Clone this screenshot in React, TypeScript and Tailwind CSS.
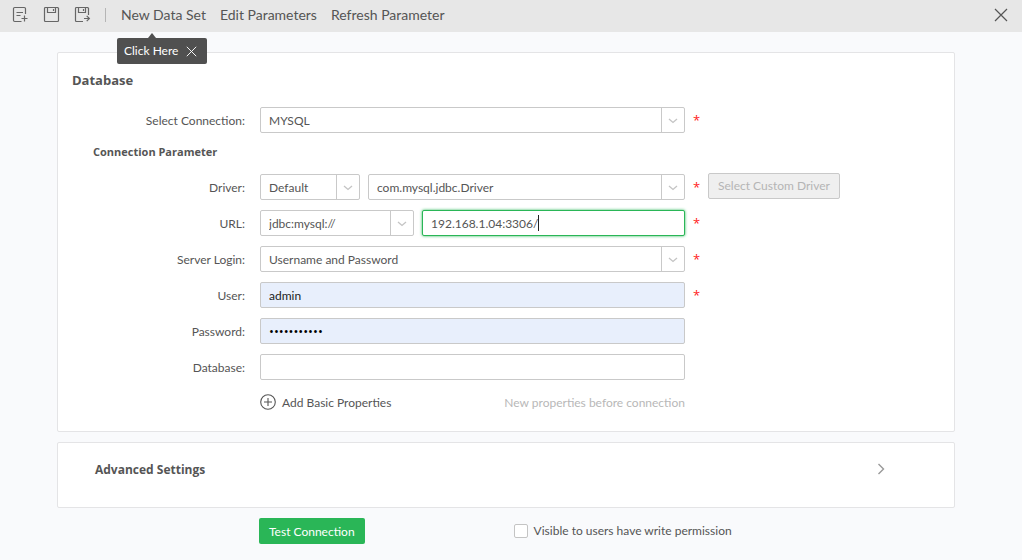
import React, { useState } from 'react';

interface FieldRowProps {
  label: string;
  htmlFor: string;
  children: React.ReactNode;
  required?: boolean;
  extra?: React.ReactNode;
}

const FieldRow: React.FC<FieldRowProps> = ({ label, htmlFor, children, required, extra }) => (
  <div className="flex h-[26px] items-center">
    <label htmlFor={htmlFor} className="w-[187px] shrink-0 pt-0.5 text-right">
      {label}
    </label>
    <div className="ml-[15px] flex w-[425px] gap-2">{children}</div>
    {required && <span className="ml-2 w-[15px] font-['Open_Sans',sans-serif] text-[13px] text-[#ff2020]">*</span>}
    {extra}
  </div>
);

interface SelectBoxProps {
  id: string;
  options: string[];
  className?: string;
  label?: string;
}

const SelectBox: React.FC<SelectBoxProps> = ({ id, options, className = 'flex-1', label }) => (
  <div className={`relative ${className}`}>
    <select
      id={id}
      aria-label={label}
      className="block h-[26px] w-full appearance-none rounded-xs border border-[#c9c9c9] bg-white pt-0.5 pr-6 pl-2 outline-none"
    >
      {options.map((o) => (
        <option key={o}>{o}</option>
      ))}
    </select>
    <span className="pointer-events-none absolute inset-y-0 right-0 flex w-6 items-center justify-center border-l border-[#c9c9c9] pt-px pr-px">
      <svg width="10" height="6" viewBox="0 0 10 6" fill="none" stroke="#c4c4c4" strokeWidth="1.3">
        <path d="M1 1l4 3.5L9 1" />
      </svg>
    </span>
  </div>
);

const iconProps = {
  width: 18,
  height: 18,
  viewBox: '0 0 18 18',
  fill: 'none',
  stroke: '#666',
  strokeWidth: 1.2,
};

const NewIcon = () => (
  <svg {...iconProps}>
    <path d="M9.5 15.5H2.7a1.2 1.2 0 0 1-1.2-1.2V2.7a1.2 1.2 0 0 1 1.2-1.2h9.6a1.2 1.2 0 0 1 1.2 1.2V8" />
    <path d="M4.5 6.5h6.5M4.5 9.5h4M12.5 9.5v6M9.5 12.5h6" />
  </svg>
);

const SaveIcon = () => (
  <svg {...iconProps}>
    <path d="M2.5 1.5h12.2l.8.8v12.2a1 1 0 0 1-1 1h-12a1 1 0 0 1-1-1v-12a1 1 0 0 1 1-1z" />
    <path d="M4.5 1.5v5h8v-5M10.5 3v2" />
  </svg>
);

const SaveAsIcon = () => (
  <svg {...iconProps}>
    <path d="M9 15.5H2.5a1 1 0 0 1-1-1v-12a1 1 0 0 1 1-1h11.2l.8.8V9" />
    <path d="M4.5 1.5v5h7v-5M9.5 3v2M10 12.5h5.5M12.7 9.8l2.7 2.7-2.7 2.7" />
  </svg>
);

const CrossIcon: React.FC<{ size: number }> = ({ size }) => (
  <svg width={size} height={size} viewBox="0 0 14 14" fill="none" stroke="currentColor" strokeWidth="1.2">
    <path d="M1 1l12 12M13 1L1 13" />
  </svg>
);

const Toolbar = () => (
  <header className="flex h-8 items-center bg-[#e7e7e7] pr-[14px] pb-0.5 pl-3 text-[14px] text-[#555]">
    <div className="flex items-center gap-[13px]">
      <button aria-label="New"><NewIcon /></button>
      <button aria-label="Save"><SaveIcon /></button>
      <button aria-label="Save as"><SaveAsIcon /></button>
    </div>
    <span className="ml-[13px] h-[14px] w-px bg-[#b5b5b5]" />
    <nav className="ml-[15px] flex gap-[14px] leading-4 whitespace-nowrap">
      <div className="relative">
        <button className="block">New Data Set</button>
        <div className="absolute top-[31px] -left-1 z-10 flex h-[26px] items-center gap-2 rounded-xs bg-[#505050] pr-[10px] pl-[7px] text-[12px] text-white">
          <span className="absolute -top-[5px] left-[31px] border-x-4 border-b-[5px] border-x-transparent border-b-[#505050]" />
          Click Here
          <button aria-label="Close tip"><CrossIcon size={11} /></button>
        </div>
      </div>
      <button>Edit Parameters</button>
      <button>Refresh Parameter</button>
    </nav>
    <button aria-label="Close" className="ml-auto"><CrossIcon size={14} /></button>
  </header>
);

const App: React.FC = () => {
  const [url, setUrl] = useState('192.168.1.04:3306/');
  const [user, setUser] = useState('admin');
  const [password, setPassword] = useState('adminadmin1');
  const [database, setDatabase] = useState('');

  return (
    <div className="min-h-screen bg-[#f9fafc] font-['Lato','Open_Sans',sans-serif] text-[12px] leading-4 text-[#555]">
      <Toolbar />

      <main className="flex flex-col gap-[10px] pt-5 pr-[67px] pl-[57px]">
        <section className="rounded-xs border border-[#e4e4e6] bg-white pb-5">
          <h2 className="pt-[17px] pl-[14px] font-['Open_Sans',sans-serif] text-[13px] leading-5 font-bold">Database</h2>

          <div className="mt-[17px]">
            <FieldRow label="Select Connection:" htmlFor="connection" required>
              <SelectBox id="connection" options={['MYSQL', 'Oracle', 'PostgreSQL']} />
            </FieldRow>
          </div>

          <h3 className="mt-[9px] mb-[13px] pl-[35px] font-['Open_Sans',sans-serif] text-[11px] leading-[19px] font-bold">
            Connection Parameter
          </h3>

          <div className="flex flex-col gap-[10px]">
            <FieldRow
              label="Driver:"
              htmlFor="driver"
              required
              extra={
                <button
                  disabled
                  className="mb-0.5 h-[26px] rounded-xs border border-[#c9c9c9] bg-[#efefef] px-[9px] whitespace-nowrap text-[#b5b5b5]"
                >
                  Select Custom Driver
                </button>
              }
            >
              <SelectBox id="driver" options={['Default', 'Custom']} className="w-[100px]" />
              <SelectBox id="driver-class" label="Driver class" options={['com.mysql.jdbc.Driver']} />
            </FieldRow>

            <FieldRow label="URL:" htmlFor="url" required>
              <SelectBox id="protocol" label="Protocol" options={['jdbc:mysql://']} className="w-[154px]" />
              <div className="flex h-[26px] flex-1 items-center rounded-xs border border-[#2ab657] bg-white pl-2 shadow-[0_0_3px_#2ab657]">
                <input
                  id="url"
                  value={url}
                  onChange={(e) => setUrl(e.target.value)}
                  className="field-sizing-content pt-0.5 caret-transparent outline-none"
                />
                <span className="h-4 w-px bg-[#222]" />
              </div>
            </FieldRow>

            <FieldRow label="Server Login:" htmlFor="login" required>
              <SelectBox id="login" options={['Username and Password', 'Kerberos']} />
            </FieldRow>

            <FieldRow label="User:" htmlFor="user" required>
              <input
                id="user"
                value={user}
                onChange={(e) => setUser(e.target.value)}
                className="h-[26px] w-full rounded-xs border border-[#c9c9c9] bg-[#e8effc] px-2 text-[#222] outline-none"
              />
            </FieldRow>

            <FieldRow label="Password:" htmlFor="password">
              <input
                id="password"
                type="password"
                value={password}
                onChange={(e) => setPassword(e.target.value)}
                className="h-[26px] w-full rounded-xs border border-[#c9c9c9] bg-[#e8effc] px-2 font-['Open_Sans',sans-serif] text-[13px] text-black outline-none"
              />
            </FieldRow>

            <FieldRow label="Database:" htmlFor="database">
              <input
                id="database"
                value={database}
                onChange={(e) => setDatabase(e.target.value)}
                className="h-[26px] w-full rounded-xs border border-[#c9c9c9] bg-white px-2 outline-none"
              />
            </FieldRow>
          </div>

          <div className="mt-[15px] ml-[202px] flex w-[425px] items-center justify-between">
            <button className="flex h-4 items-center gap-[6px]">
              <svg className="mb-[3px]" width="16" height="16" viewBox="0 0 16 16" fill="none" stroke="#555" strokeWidth="1.1">
                <circle cx="8" cy="8" r="7.3" />
                <path d="M8 4v8M4 8h8" />
              </svg>
              Add Basic Properties
            </button>
            <span className="text-[#b8b8b8]">New properties before connection</span>
          </div>
        </section>

        <section className="rounded-xs border border-[#e4e4e6] bg-white">
          <button className="flex h-16 w-full items-start justify-between pt-[17px] pr-[69px] pl-[37px]">
            <span className="font-['Open_Sans',sans-serif] leading-5 font-bold">Advanced Settings</span>
            <svg className="mt-[3px]" width="8" height="12" viewBox="0 0 8 12" fill="none" stroke="#999" strokeWidth="1.4">
              <path d="M1.5 1l5 5-5 5" />
            </svg>
          </button>
        </section>

        <div className="flex items-center pl-[202px]">
          <button className="h-[26px] rounded-xs bg-[#2ab657] px-[10px] pt-0.5 whitespace-nowrap text-white">
            Test Connection
          </button>
          <label className="ml-[149px] flex items-center gap-[6px] whitespace-nowrap">
            <input type="checkbox" className="size-[14px] appearance-none rounded-xs border border-[#c4c4c4] bg-white" />
            Visible to users have write permission
          </label>
        </div>
      </main>
    </div>
  );
};

export default App;
